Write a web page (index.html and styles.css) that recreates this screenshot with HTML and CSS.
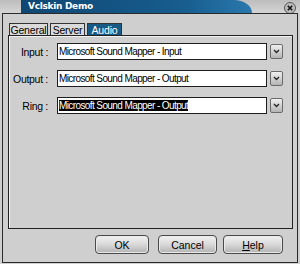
FILE: index.html
```html
<!DOCTYPE html>
<html>
<head>
    <title>Vclskin Demo</title>
    <link rel="stylesheet" href="styles.css">
</head>
<body>
<div class="window">
    <div class="titlebar">
        <div class="caption">Vclskin Demo</div>
        <div class="close">
            <svg width="12" height="12" viewBox="0 0 12 12">
                <circle cx="6" cy="6" r="5.5" fill="#bdbdbd" stroke="#555" stroke-width="1"/>
                <path d="M3.8 3.8 L8.2 8.2 M8.2 3.8 L3.8 8.2" stroke="#111" stroke-width="1.6"/>
            </svg>
        </div>
    </div>
    <div class="frame">
        <div class="tabs">
            <div class="tab tab-general">General</div>
            <div class="tab tab-server">Server</div>
            <div class="tab tab-audio active">Audio</div>
        </div>
        <div class="panel">
            <div class="row">
                <label>Input :</label>
                <div class="combo">Microsoft Sound Mapper - Input</div>
                <div class="drop"><svg width="7" height="5" viewBox="0 0 7 5"><path d="M1 1 L3.5 3.5 L6 1" fill="none" stroke="#222" stroke-width="1.3"/></svg></div>
            </div>
            <div class="row">
                <label>Output :</label>
                <div class="combo">Microsoft Sound Mapper - Output</div>
                <div class="drop"><svg width="7" height="5" viewBox="0 0 7 5"><path d="M1 1 L3.5 3.5 L6 1" fill="none" stroke="#222" stroke-width="1.3"/></svg></div>
            </div>
            <div class="row">
                <label>Ring :</label>
                <div class="combo"><span class="selected">Microsoft Sound Mapper - Output</span></div>
                <div class="drop"><svg width="7" height="5" viewBox="0 0 7 5"><path d="M1 1 L3.5 3.5 L6 1" fill="none" stroke="#222" stroke-width="1.3"/></svg></div>
            </div>
        </div>
        <div class="buttons">
            <button class="btn btn-ok">OK</button>
            <button class="btn btn-cancel">Cancel</button>
            <button class="btn btn-help"><u>H</u>elp</button>
        </div>
    </div>
</div>
</body>
</html>
```

FILE: styles.css
```css
body {
    margin: 0;
    font-family: 'Liberation Sans', Arial, sans-serif;
    font-size: 10px;
}

.window {
    width: 300px;
    height: 264px;
    background: #cfcfcf;
    display: flex;
    flex-direction: column;
}

.titlebar {
    height: 13px;
    display: flex;
    align-items: center;
    background: linear-gradient(#bdbdbd, #d4d4d4);
}

.caption {
    height: 13px;
    width: 224px;
    margin-left: 21px;
    padding-left: 7px;
    background: linear-gradient(90deg, #0f4774, #175d8e 70%, #2a78ad);
    border-top-right-radius: 18px 13px;
    color: #ffffff;
    font-family: 'DejaVu Sans', sans-serif;
    font-weight: bold;
    font-size: 9px;
    line-height: 13px;
    letter-spacing: -0.3px;
}

.close {
    margin-left: auto;
    margin-right: 4px;
    height: 12px;
    margin-top: 2px;
}

.frame {
    flex: 1;
    margin: 0 2px 1px 2px;
    border: 1px solid #2a2a2a;
    padding-top: 9px;
    display: flex;
    flex-direction: column;
}

.tabs {
    display: flex;
    margin-left: 6px;
    height: 12px;
    gap: 2px;
}

.tab {
    height: 12px;
    line-height: 12px;
    border: 1px solid #333;
    border-bottom: none;
    background: #dadada;
    color: #000;
    font-size: 10.5px;
    text-align: center;
    letter-spacing: -0.2px;
}

.tab-general { width: 37px; }
.tab-server { width: 33px; }
.tab-audio { width: 33px; }

.tab.active {
    background: #175a86;
    color: #ffffff;
}

.panel {
    margin: 0 4px 0 5px;
    height: 185px;
    border: 1px solid #222;
    box-shadow: inset 1px 1px 0 #f2f2f2;
    padding-top: 7px;
    display: flex;
    flex-direction: column;
    gap: 10px;
}

.row {
    display: flex;
    align-items: center;
    height: 17px;
}

.row label {
    width: 39px;
    text-align: right;
    margin-right: 9px;
    font-size: 10.5px;
    letter-spacing: -0.3px;
}

.combo {
    width: 207px;
    height: 15px;
    border: 1px solid #1e1e1e;
    background: #ffffff;
    line-height: 15px;
    font-size: 10px;
    letter-spacing: -0.6px;
    padding-left: 1px;
}

.selected {
    background: #000000;
    color: #ffffff;
}

.drop {
    width: 11px;
    height: 13px;
    margin-left: 3px;
    border: 1px solid #6a6a6a;
    border-radius: 2px;
    background: linear-gradient(#f0f0f0, #b4b4b4);
    display: flex;
    align-items: center;
    justify-content: center;
}

.buttons {
    display: flex;
    margin-top: 6px;
    margin-left: 92px;
}

.btn {
    height: 19px;
    padding: 0;
    border: 1px solid #4a4a4a;
    border-radius: 4px;
    background: linear-gradient(#f2f2f2, #d8d8d8 50%, #b2b2b2);
    box-shadow: inset 0 0 0 1px #e9e9e9;
    font-family: 'Liberation Sans', Arial, sans-serif;
    font-size: 10.5px;
    color: #000;
}

.btn-ok { width: 54px; }
.btn-cancel { width: 59px; margin-left: 9px; }
.btn-help { width: 60px; margin-left: 6px; }
```
